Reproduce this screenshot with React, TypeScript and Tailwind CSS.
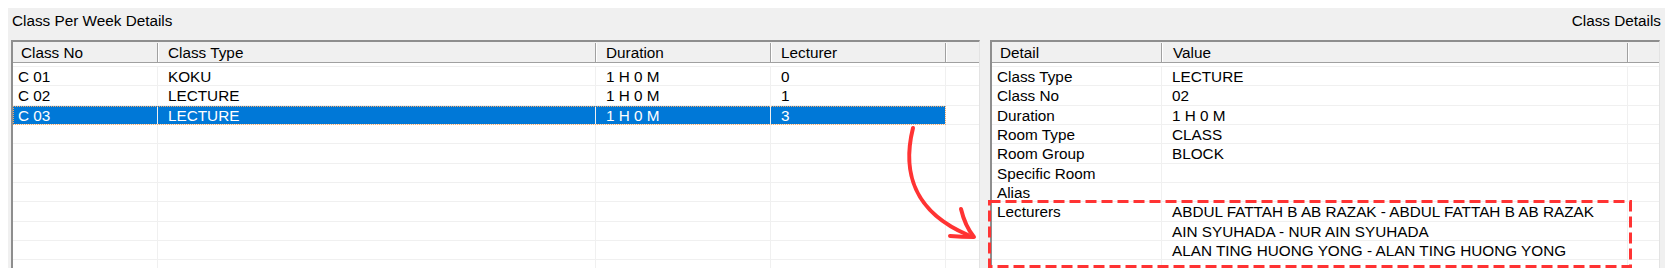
import React from 'react'

type Col = { w: string; head: string; pad: string; headPad: string }

const leftCols: Col[] = [
  { w: 'w-[145px]', head: 'Class No', pad: 'pl-[5px]', headPad: 'pl-[8px]' },
  { w: 'w-[438px]', head: 'Class Type', pad: 'pl-[10px]', headPad: 'pl-[10px]' },
  { w: 'w-[175px]', head: 'Duration', pad: 'pl-[10px]', headPad: 'pl-[10px]' },
  { w: 'w-[175px]', head: 'Lecturer', pad: 'pl-[10px]', headPad: 'pl-[10px]' },
]

const rightCols: Col[] = [
  { w: 'w-[170px]', head: 'Detail', pad: 'pl-[5px]', headPad: 'pl-[8px]' },
  { w: 'w-[466px]', head: 'Value', pad: 'pl-[10px]', headPad: 'pl-[11px]' },
]

const classes = [
  ['C 01', 'KOKU', '1 H 0 M', '0'],
  ['C 02', 'LECTURE', '1 H 0 M', '1'],
  ['C 03', 'LECTURE', '1 H 0 M', '3'],
]

const details = [
  ['Class Type', 'LECTURE'],
  ['Class No', '02'],
  ['Duration', '1 H 0 M'],
  ['Room Type', 'CLASS'],
  ['Room Group', 'BLOCK'],
  ['Specific Room', ''],
  ['Alias', ''],
  ['Lecturers', 'ABDUL FATTAH B AB RAZAK - ABDUL FATTAH B AB RAZAK'],
  ['', 'AIN SYUHADA - NUR AIN SYUHADA'],
  ['', 'ALAN TING HUONG YONG - ALAN TING HUONG YONG'],
]

function Grid({
  cols,
  rows,
  total,
  selected,
  width,
}: {
  cols: Col[]
  rows: string[][]
  total: number
  selected?: number
  width: string
}) {
  const filled = Array.from({ length: total }, (_, i) => rows[i] ?? cols.map(() => ''))
  return (
    <div className={`${width} h-full overflow-hidden bg-white border-l-2 border-t-2 border-[#8e8e8e] border-r border-r-[#e3e3e3] flex flex-col`}>
      <div className="flex h-[21px] shrink-0 bg-[#f0f0f0] border-b border-[#a0a0a0] pt-[1px] leading-[20px]">
        {cols.map((c) => (
          <div key={c.head} className={`${c.w} ${c.headPad} shrink-0 border-r border-[#a0a0a0] shadow-[1px_0_0_#fff] whitespace-nowrap`}>
            {c.head}
          </div>
        ))}
        <div className="flex-1" />
      </div>
      <div className="h-[4px] shrink-0 border-b border-[#f0f0f0]" />
      {filled.map((r, i) => {
        const sel = i === selected
        return (
          <div key={i} className="flex h-[19.33px] shrink-0 leading-[19px]">
            <div className={`flex ${sel ? 'bg-[#0078d7] text-white outline-1 outline-dotted outline-[#f2a86a] -outline-offset-1' : ''}`}>
              {cols.map((c, j) => (
                <div key={j} className={`${c.w} ${c.pad} shrink-0 border-r border-b border-[#f0f0f0] whitespace-nowrap`}>
                  {r[j]}
                </div>
              ))}
            </div>
            <div className="flex-1 border-b border-[#f0f0f0]" />
          </div>
        )
      })}
    </div>
  )
}

export default function App() {
  return (
    <div className="relative w-[1673px] h-[274px] bg-white overflow-hidden font-['Liberation_Sans',Arial,sans-serif] text-[15.3px] text-black">
      <div className="ml-2 mt-2 w-[1657px] h-[260px] bg-[#f0f0f0] flex flex-col">
        <div className="flex justify-between h-[32px] shrink-0 pl-[4px] pr-[4px] pt-[4px] leading-[18px]">
          <span>Class Per Week Details</span>
          <span>Class Details</span>
        </div>
        <div className="flex flex-1 min-h-0 pl-[3px] gap-[10px]">
          <Grid cols={leftCols} rows={classes} total={11} selected={2} width="w-[969px]" />
          <Grid cols={rightCols} rows={details} total={11} width="w-[670px]" />
        </div>
      </div>
      <svg className="absolute inset-0 pointer-events-none" width="1673" height="274" viewBox="0 0 1673 274">
        <path d="M913 128 C 902 172, 914 212, 968 235" fill="none" stroke="#ff3333" strokeWidth="4" strokeLinecap="round" />
        <path d="M961 209 Q 965 226 974 237 Q 962 237 950 236" fill="none" stroke="#ff3333" strokeWidth="4" strokeLinecap="round" strokeLinejoin="round" />
        <rect x="989.5" y="201.5" width="641" height="65" fill="none" stroke="#ff3333" strokeWidth="3" strokeDasharray="11 5" />
      </svg>
    </div>
  )
}
